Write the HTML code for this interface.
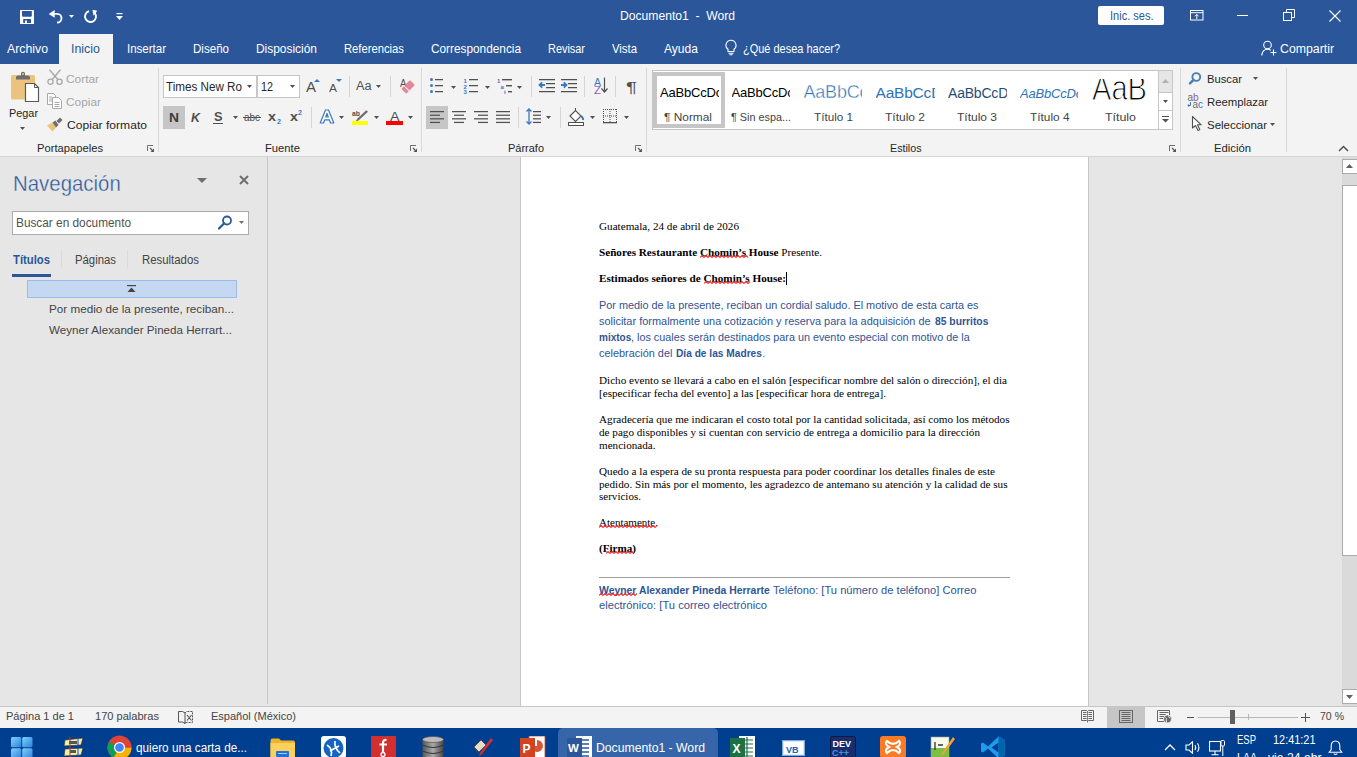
<!DOCTYPE html>
<html><head><meta charset="utf-8">
<style>
*{margin:0;padding:0;box-sizing:border-box}
html,body{width:1357px;height:757px;overflow:hidden;background:#E6E6E6;font-family:"Liberation Sans",sans-serif}
.a{position:absolute;display:block}
.t{position:absolute;white-space:nowrap;line-height:1;transform-origin:0 0;-webkit-font-smoothing:antialiased}
b{font-weight:bold}
</style></head><body>
<div class="a" style="left:0px;top:0px;width:1357px;height:64px;background:#2B579A;"></div>
<div class="a" style="left:0px;top:64px;width:1357px;height:92px;background:#F3F3F3;"></div>
<div class="a" style="left:0px;top:156px;width:1357px;height:1px;background:#D4D4D4;"></div>
<div class="a" style="left:0px;top:157px;width:1357px;height:549px;background:#E6E6E6;"></div>
<div class="a" style="left:267px;top:157px;width:1px;height:547px;background:#C6C6C6;"></div>
<div class="a" style="left:520px;top:157px;width:569px;height:549px;background:#C6C6C6;"></div>
<div class="a" style="left:521px;top:157px;width:567px;height:549px;background:#FFFFFF;"></div>
<div class="a" style="left:0px;top:706px;width:1357px;height:1px;background:#C6C6C6;"></div>
<div class="a" style="left:0px;top:707px;width:1357px;height:21px;background:#F3F3F3;"></div>
<div class="a" style="left:0px;top:728px;width:1357px;height:29px;background:#003E8F;"></div>
<div id="f1" class="t" style="left:620px;top:9.92px;font-size:12.5px;color:#FFFFFF;transform:scaleX(0.9698);">Documento1&nbsp; - &nbsp;Word</div>
<svg class="a" style="left:20px;top:10px;" width="14" height="14" viewBox="0 0 14 14"><rect x="0" y="0" width="14" height="14" rx="0.6" fill="#fff"/><path d="M2 1H11.8V6L11 6.8H2.8L2 6Z" fill="#2B579A"/><rect x="3.2" y="9" width="7.8" height="4" fill="#2B579A"/><rect x="5" y="10.5" width="2" height="2.5" fill="#fff"/></svg>
<svg class="a" style="left:44px;top:6px;" width="22" height="20" viewBox="0 0 22 20"><path d="M4.7 7.9L10.7 4V11.75Z" fill="#fff"/><path d="M9.5 7.9H13.2A4.3 4.3 0 0 1 13.2 16.5H13" fill="none" stroke="#fff" stroke-width="1.9"/></svg>
<svg class="a" style="left:69px;top:15px;" width="5" height="3" viewBox="0 0 5 3"><path d="M0 0H5L2.5 3Z" fill="#fff"/></svg>
<svg class="a" style="left:83px;top:9px;" width="16" height="16" viewBox="0 0 16 16"><path d="M10.08 2.64A5.5 5.5 0 1 1 6.08 2.19" fill="none" stroke="#fff" stroke-width="1.9"/><path d="M9.5 0.8L14.2 1.8L10.6 6.8Z" fill="#fff"/></svg>
<svg class="a" style="left:116px;top:13px;" width="7" height="8" viewBox="0 0 7 8"><rect x="0.5" y="0" width="6" height="1.2" fill="#fff"/><path d="M0 3H7L3.5 7Z" fill="#fff"/></svg>
<div class="a" style="left:1098px;top:6px;width:66px;height:19px;background:#FFFFFF;border-radius:2px"></div>
<div id="f2" class="t" style="left:1109.5px;top:9.12px;font-size:13px;color:#2B579A;transform:scaleX(0.8480);">Inic. ses.</div>
<svg class="a" style="left:1190px;top:10px;" width="14" height="11" viewBox="0 0 14 11"><rect x="0.5" y="0.5" width="12.5" height="9.5" fill="none" stroke="#fff"/><rect x="1" y="2.2" width="12" height="1" fill="#fff"/><path d="M6.8 4.5V9M5 6.3L6.8 4.5L8.6 6.3" fill="none" stroke="#fff"/></svg>
<div class="a" style="left:1237px;top:15px;width:11px;height:1px;background:#FFFFFF;"></div>
<svg class="a" style="left:1283px;top:9px;" width="12" height="12" viewBox="0 0 12 12"><rect x="0.5" y="3.5" width="8" height="8" fill="none" stroke="#fff"/><path d="M3.5 3.5V0.5H11.5V8.5H8.5" fill="none" stroke="#fff"/></svg>
<svg class="a" style="left:1329px;top:10px;" width="12" height="12" viewBox="0 0 12 12"><path d="M0.5 0.5L11.5 11.5M11.5 0.5L0.5 11.5" stroke="#fff" stroke-width="1.1"/></svg>
<div class="a" style="left:59px;top:34px;width:54px;height:30px;background:#F3F3F3;"></div>
<div id="f3" class="t" style="left:7px;top:42.12px;font-size:13px;color:#FFFFFF;transform:scaleX(0.9456);">Archivo</div>
<div id="f4" class="t" style="left:127px;top:42.12px;font-size:13px;color:#FFFFFF;transform:scaleX(0.8848);">Insertar</div>
<div id="f5" class="t" style="left:193px;top:42.12px;font-size:13px;color:#FFFFFF;transform:scaleX(0.8896);">Dise&ntilde;o</div>
<div id="f6" class="t" style="left:256px;top:42.12px;font-size:13px;color:#FFFFFF;transform:scaleX(0.9175);">Disposici&oacute;n</div>
<div id="f7" class="t" style="left:344px;top:42.12px;font-size:13px;color:#FFFFFF;transform:scaleX(0.8649);">Referencias</div>
<div id="f8" class="t" style="left:431px;top:42.12px;font-size:13px;color:#FFFFFF;transform:scaleX(0.9089);">Correspondencia</div>
<div id="f9" class="t" style="left:548px;top:42.12px;font-size:13px;color:#FFFFFF;transform:scaleX(0.8394);">Revisar</div>
<div id="f10" class="t" style="left:612px;top:42.12px;font-size:13px;color:#FFFFFF;transform:scaleX(0.8719);">Vista</div>
<div id="f11" class="t" style="left:664px;top:42.12px;font-size:13px;color:#FFFFFF;transform:scaleX(0.9279);">Ayuda</div>
<div id="f12" class="t" style="left:743px;top:42.12px;font-size:13px;color:#FFFFFF;transform:scaleX(0.8442);">&iquest;Qu&eacute; desea hacer?</div>
<div id="f13" class="t" style="left:1280px;top:42.12px;font-size:13px;color:#FFFFFF;transform:scaleX(0.9461);">Compartir</div>
<div id="f14" class="t" style="left:71px;top:42.12px;font-size:13px;color:#2B579A;transform:scaleX(0.9552);">Inicio</div>
<svg class="a" style="left:724px;top:39px;" width="14" height="17" viewBox="0 0 14 17"><path d="M7 1.2A5 5 0 0 0 4 10.2V12.5H10V10.2A5 5 0 0 0 7 1.2Z" fill="none" stroke="#fff" stroke-width="1.1"/><path d="M4.5 14.2H9.5M5.5 15.8H8.5" stroke="#fff" stroke-width="1.1"/></svg>
<svg class="a" style="left:1261px;top:40px;" width="16" height="16" viewBox="0 0 16 16"><circle cx="6.5" cy="5" r="3.8" fill="none" stroke="#fff" stroke-width="1.1"/><path d="M0.8 15.5C1.2 11 3.5 9.2 6.5 9.2C8 9.2 9 9.6 9.8 10.2" fill="none" stroke="#fff" stroke-width="1.1"/><path d="M12.5 9.5V15.5M9.5 12.5H15.5" stroke="#fff" stroke-width="1.1"/></svg>
<div class="a" style="left:158px;top:68px;width:1px;height:84px;background:#D8D8D8;"></div>
<div class="a" style="left:421px;top:68px;width:1px;height:84px;background:#D8D8D8;"></div>
<div class="a" style="left:646px;top:68px;width:1px;height:84px;background:#D8D8D8;"></div>
<div class="a" style="left:1180px;top:68px;width:1px;height:84px;background:#D8D8D8;"></div>
<div class="a" style="left:1286px;top:68px;width:1px;height:84px;background:#D8D8D8;"></div>
<svg class="a" style="left:10px;top:71px;" width="31" height="32" viewBox="0 0 31 32"><rect x="1" y="4" width="24" height="24.5" rx="1.5" fill="#EBC37F"/><path d="M6 8.5V6.5Q6 4.5 8 4.5H11V2.5Q11 0.8 13 0.8Q15 0.8 15 2.5V4.5H18Q20 4.5 20 6.5V8.5Z" fill="#6E6E6E"/><circle cx="13" cy="3" r="1" fill="#EBC37F"/><path d="M15.5 12.5H24.5L28.5 16.5V30.5H15.5Z" fill="#fff" stroke="#5A5A5A" stroke-width="1.2"/><path d="M24.5 12.5V16.5H28.5" fill="none" stroke="#5A5A5A" stroke-width="1"/></svg>
<div id="f15" class="t" style="left:9px;top:107.89px;font-size:11.5px;color:#262626;transform:scaleX(0.9450);">Pegar</div>
<svg class="a" style="left:20px;top:127px;" width="5" height="3" viewBox="0 0 5 3"><path d="M0 0H5L2.5 3Z" fill="#505050"/></svg>
<div id="f16" class="t" style="left:66px;top:73.89px;font-size:11.5px;color:#A6A6A6;transform:scaleX(1.0328);">Cortar</div>
<svg class="a" style="left:47px;top:69px;" width="16" height="17" viewBox="0 0 16 17"><circle cx="3.5" cy="12.8" r="2.6" fill="none" stroke="#A8A8A8" stroke-width="1.3"/><circle cx="12.5" cy="12.8" r="2.6" fill="none" stroke="#A8A8A8" stroke-width="1.3"/><path d="M2.5 0.8L10.8 10.5M13.5 0.8L5.2 10.5" stroke="#A8A8A8" stroke-width="1.4"/></svg>
<div id="f17" class="t" style="left:66px;top:96.89px;font-size:11.5px;color:#A6A6A6;transform:scaleX(1.0327);">Copiar</div>
<svg class="a" style="left:46px;top:93px;" width="17" height="16" viewBox="0 0 17 16"><path d="M1.5 0.5H7.5L9.5 2.5V11.5H1.5Z" fill="#fff" stroke="#A8A8A8"/><path d="M6.5 4.5H12.5L15.5 7.5V15.5H6.5Z" fill="#fff" stroke="#A8A8A8"/><path d="M3 4H6M3 6H6M3 8H6M8.5 9.5H13.5M8.5 11.5H13.5M8.5 13.5H13.5" stroke="#A8A8A8"/></svg>
<div id="f18" class="t" style="left:66.5px;top:119.89px;font-size:11.5px;color:#262626;transform:scaleX(1.0518);">Copiar formato</div>
<svg class="a" style="left:46px;top:116px;" width="18" height="17" viewBox="0 0 18 17"><path d="M1 9.5L6.5 6.5L10 11.5L6.5 15.5Z" fill="#EBC37F"/><path d="M6.5 6.5L10 11.5L12.5 9L9.5 4.5Z" fill="#6E6E6E"/><path d="M10.5 5L14 1.5L16.5 4L13 7.5Z" fill="#6E6E6E"/></svg>
<div id="f19" class="t" style="left:36.5px;top:142.89px;font-size:11.5px;color:#262626;transform:scaleX(0.9737);">Portapapeles</div>
<svg class="a" style="left:147px;top:145px;" width="8" height="8" viewBox="0 0 8 8"><path d="M0.5 6V0.5H6" fill="none" stroke="#6E6E6E" stroke-width="1"/><path d="M3 3L6 6" stroke="#555" stroke-width="1.1"/><path d="M7 3.5V7H3.5Z" fill="#555"/></svg>
<div class="a" style="left:163px;top:75px;width:94px;height:23px;background:#C6C6C6;"></div>
<div class="a" style="left:164px;top:76px;width:92px;height:21px;background:#FFFFFF;"></div>
<div class="a" style="left:257px;top:75px;width:43px;height:23px;background:#C6C6C6;"></div>
<div class="a" style="left:258px;top:76px;width:41px;height:21px;background:#FFFFFF;"></div>
<div id="f20" class="t" style="left:166px;top:80.92px;font-size:12.5px;color:#262626;transform:scaleX(0.9325);">Times New Ro</div>
<svg class="a" style="left:247px;top:85px;" width="5" height="3" viewBox="0 0 5 3"><path d="M0 0H5L2.5 3Z" fill="#505050"/></svg>
<div id="f21" class="t" style="left:261px;top:80.92px;font-size:12.5px;color:#262626;transform:scaleX(0.8629);">12</div>
<svg class="a" style="left:290px;top:85px;" width="5" height="3" viewBox="0 0 5 3"><path d="M0 0H5L2.5 3Z" fill="#505050"/></svg>
<div id="f22" class="t" style="left:305.5px;top:80.02px;font-size:14px;color:#505050;transform:scaleX(1.0702);">A</div>
<svg class="a" style="left:314px;top:79px;" width="6" height="3" viewBox="0 0 6 3"><path d="M0 3H6L3 0Z" fill="#3A78C3"/></svg>
<div id="f23" class="t" style="left:328.5px;top:83.06px;font-size:11px;color:#505050;transform:scaleX(1.0894);">A</div>
<svg class="a" style="left:335.5px;top:79px;" width="6" height="3" viewBox="0 0 6 3"><path d="M0 0H6L3 3Z" fill="#3A78C3"/></svg>
<div class="a" style="left:349px;top:76px;width:1px;height:21px;background:#D5D5D5;"></div>
<div id="f24" class="t" style="left:356px;top:79.92px;font-size:12.5px;color:#505050;transform:scaleX(1.0133);">Aa</div>
<svg class="a" style="left:376px;top:85px;" width="5" height="3" viewBox="0 0 5 3"><path d="M0 0H5L2.5 3Z" fill="#505050"/></svg>
<div class="a" style="left:390px;top:76px;width:1px;height:21px;background:#D5D5D5;"></div>
<div id="f25" class="t" style="left:399.5px;top:78.36px;font-size:10.5px;color:#505050;transform:scaleX(0.9265);">A</div>
<svg class="a" style="left:400px;top:79px;" width="16" height="16" viewBox="0 0 16 16"><path d="M9.2 1.8Q10 1 10.8 1.8L14.2 5.2Q15 6 14.2 6.8L9.5 11.5L4.5 6.5Z" fill="#E3889A"/><path d="M3.8 7.2L8.8 12.2L7 14Q6.2 14.8 5.4 14L2 10.6Q1.2 9.8 2 9Z" fill="#E3889A"/></svg>
<div class="a" style="left:163px;top:106px;width:22px;height:23px;background:#C6C6C6;"></div>
<div id="f26" class="t" style="left:169px;top:111.12px;font-size:13px;color:#3C3C3C;font-weight:bold;transform:scaleX(1.0649);">N</div>
<div id="f27" class="t" style="left:191px;top:111.12px;font-size:13px;color:#505050;font-weight:bold;font-style:italic;transform:scaleX(0.9584);">K</div>
<div id="f28" class="t" style="left:213.5px;top:110.92px;font-size:12.5px;color:#505050;font-weight:bold;transform:scaleX(1.0187);">S</div>
<div class="a" style="left:213px;top:122.6px;width:10px;height:1.3px;background:#505050;"></div>
<svg class="a" style="left:233px;top:116px;" width="5" height="3" viewBox="0 0 5 3"><path d="M0 0H5L2.5 3Z" fill="#505050"/></svg>
<div id="f29" class="t" style="left:244px;top:112.06px;font-size:11px;color:#505050;transform:scaleX(0.9014);">abc</div>
<div class="a" style="left:243px;top:117px;width:18px;height:1px;background:#505050;"></div>
<div id="f30" class="t" style="left:268px;top:110.12px;font-size:13px;color:#505050;font-weight:bold;transform:scaleX(1.1058);">x</div>
<div id="f31" class="t" style="left:277px;top:118.07px;font-size:7px;color:#3A78C3;font-weight:bold;">2</div>
<div id="f32" class="t" style="left:290px;top:110.12px;font-size:13px;color:#505050;font-weight:bold;transform:scaleX(1.1058);">x</div>
<div id="f33" class="t" style="left:298px;top:109.07px;font-size:7px;color:#3A78C3;font-weight:bold;">2</div>
<div class="a" style="left:311px;top:107px;width:1px;height:21px;background:#D5D5D5;"></div>
<svg class="a" style="left:319px;top:109px;" width="16" height="15" viewBox="0 0 16 15"><path d="M1.2 14L6.5 1H9.5L14.8 14H11.5L10.3 10.8H5.7L4.5 14Z M6.7 8H9.3L8 4.4Z" fill="#fff" stroke="#3A78C3" stroke-width="1.2" stroke-linejoin="round"/></svg>
<svg class="a" style="left:339px;top:116px;" width="5" height="3" viewBox="0 0 5 3"><path d="M0 0H5L2.5 3Z" fill="#505050"/></svg>
<div id="f34" class="t" style="left:352px;top:109.85px;font-size:8px;color:#505050;font-weight:bold;transform:scaleX(0.8562);">ab</div>
<svg class="a" style="left:353px;top:110px;" width="16" height="12" viewBox="0 0 16 12"><path d="M13.2 0.2L4.2 8.8L2.5 11.8L5.8 10.3L15 1.8Z" fill="#6E6E6E"/></svg>
<div class="a" style="left:352px;top:121px;width:16px;height:4px;background:#FFFF00;"></div>
<svg class="a" style="left:374px;top:116px;" width="5" height="3" viewBox="0 0 5 3"><path d="M0 0H5L2.5 3Z" fill="#505050"/></svg>
<div id="f35" class="t" style="left:389.5px;top:110.07px;font-size:13.5px;color:#505050;transform:scaleX(1.0537);">A</div>
<div class="a" style="left:386px;top:121px;width:17px;height:4px;background:#FF0000;"></div>
<svg class="a" style="left:408px;top:116px;" width="5" height="3" viewBox="0 0 5 3"><path d="M0 0H5L2.5 3Z" fill="#505050"/></svg>
<svg class="a" style="left:410px;top:145px;" width="8" height="8" viewBox="0 0 8 8"><path d="M0.5 6V0.5H6" fill="none" stroke="#6E6E6E" stroke-width="1"/><path d="M3 3L6 6" stroke="#555" stroke-width="1.1"/><path d="M7 3.5V7H3.5Z" fill="#555"/></svg>
<div id="f36" class="t" style="left:264.5px;top:142.89px;font-size:11.5px;color:#262626;transform:scaleX(0.9773);">Fuente</div>
<svg class="a" style="left:429px;top:77px;" width="16" height="17" viewBox="0 0 16 17"><circle cx="2.5" cy="2.5" r="1.5" fill="#3A78C3"/><circle cx="2.5" cy="8.5" r="1.5" fill="#3A78C3"/><circle cx="2.5" cy="14.5" r="1.5" fill="#3A78C3"/><rect x="6" y="2" width="8" height="1.25" fill="#505050"/><rect x="6" y="8" width="8" height="1.25" fill="#505050"/><rect x="6" y="14" width="8" height="1.25" fill="#505050"/></svg>
<svg class="a" style="left:451px;top:86px;" width="5" height="3" viewBox="0 0 5 3"><path d="M0 0H5L2.5 3Z" fill="#505050"/></svg>
<svg class="a" style="left:462px;top:77px;" width="18" height="17" viewBox="0 0 18 17"><text x="1.5" y="5.5" font-size="6" font-family="Liberation Sans" font-weight="bold" fill="#3A78C3">1</text><text x="1.5" y="11.5" font-size="6" font-family="Liberation Sans" font-weight="bold" fill="#3A78C3">2</text><text x="1.5" y="17" font-size="6" font-family="Liberation Sans" font-weight="bold" fill="#3A78C3">3</text><rect x="7" y="2" width="9" height="1.25" fill="#505050"/><rect x="7" y="8" width="9" height="1.25" fill="#505050"/><rect x="7" y="14" width="9" height="1.25" fill="#505050"/></svg>
<svg class="a" style="left:485px;top:86px;" width="5" height="3" viewBox="0 0 5 3"><path d="M0 0H5L2.5 3Z" fill="#505050"/></svg>
<svg class="a" style="left:496px;top:77px;" width="20" height="17" viewBox="0 0 20 17"><text x="1" y="5.5" font-size="6" font-family="Liberation Sans" font-weight="bold" fill="#3A78C3">1</text><text x="4.5" y="11.5" font-size="6" font-family="Liberation Sans" font-weight="bold" fill="#3A78C3">a</text><text x="8" y="17" font-size="6" font-family="Liberation Sans" font-weight="bold" fill="#3A78C3">i</text><rect x="6" y="2" width="10" height="1.4" fill="#505050"/><rect x="10" y="8" width="6" height="1.4" fill="#505050"/><rect x="12" y="14" width="4" height="1.4" fill="#505050"/></svg>
<svg class="a" style="left:517px;top:86px;" width="5" height="3" viewBox="0 0 5 3"><path d="M0 0H5L2.5 3Z" fill="#505050"/></svg>
<div class="a" style="left:531px;top:76px;width:1px;height:21px;background:#D5D5D5;"></div>
<svg class="a" style="left:538px;top:78px;" width="18" height="15" viewBox="0 0 18 15"><rect x="1" y="1" width="16" height="1.25" fill="#505050"/><rect x="8" y="5" width="9" height="1.25" fill="#505050"/><rect x="8" y="9" width="9" height="1.25" fill="#505050"/><rect x="1" y="13" width="16" height="1.25" fill="#505050"/><path d="M7 7H1.5M4.2 4.3L1.5 7L4.2 9.7" fill="none" stroke="#3A78C3" stroke-width="1.8"/></svg>
<svg class="a" style="left:560px;top:78px;" width="18" height="15" viewBox="0 0 18 15"><rect x="1" y="1" width="16" height="1.25" fill="#505050"/><rect x="8" y="5" width="9" height="1.25" fill="#505050"/><rect x="8" y="9" width="9" height="1.25" fill="#505050"/><rect x="1" y="13" width="16" height="1.25" fill="#505050"/><path d="M1 7H6.5M3.8 4.3L6.5 7L3.8 9.7" fill="none" stroke="#3A78C3" stroke-width="1.8"/></svg>
<div class="a" style="left:584px;top:76px;width:1px;height:21px;background:#D5D5D5;"></div>
<div id="f37" class="t" style="left:593.5px;top:78.03px;font-size:10px;color:#3A78C3;transform:scaleX(1.0492);">A</div>
<div id="f38" class="t" style="left:593.5px;top:86.03px;font-size:10px;color:#9B59B6;transform:scaleX(1.1458);">Z</div>
<svg class="a" style="left:601px;top:77px;" width="7" height="16" viewBox="0 0 7 16"><path d="M3.5 0.5V15M0.5 11.5L3.5 15L6.5 11.5" fill="none" stroke="#505050" stroke-width="1.2"/></svg>
<div class="a" style="left:615px;top:76px;width:1px;height:21px;background:#D5D5D5;"></div>
<div id="f39" class="t" style="left:625.5px;top:80.02px;font-size:14px;color:#505050;transform:scaleX(1.4606);">&para;</div>
<div class="a" style="left:426px;top:106px;width:22px;height:23px;background:#C6C6C6;"></div>
<svg class="a" style="left:430px;top:111px;" width="15" height="14" viewBox="0 0 15 14"><rect x="0" y="0.0" width="14" height="1.25" fill="#505050"/><rect x="0" y="3.6" width="10" height="1.25" fill="#505050"/><rect x="0" y="7.2" width="14" height="1.25" fill="#505050"/><rect x="0" y="10.8" width="10" height="1.25" fill="#505050"/></svg>
<svg class="a" style="left:452px;top:111px;" width="15" height="14" viewBox="0 0 15 14"><rect x="0" y="0.0" width="14" height="1.25" fill="#505050"/><rect x="2" y="3.6" width="10" height="1.25" fill="#505050"/><rect x="0" y="7.2" width="14" height="1.25" fill="#505050"/><rect x="2" y="10.8" width="10" height="1.25" fill="#505050"/></svg>
<svg class="a" style="left:474px;top:111px;" width="15" height="14" viewBox="0 0 15 14"><rect x="0" y="0.0" width="14" height="1.25" fill="#505050"/><rect x="4" y="3.6" width="10" height="1.25" fill="#505050"/><rect x="0" y="7.2" width="14" height="1.25" fill="#505050"/><rect x="4" y="10.8" width="10" height="1.25" fill="#505050"/></svg>
<svg class="a" style="left:496px;top:111px;" width="15" height="14" viewBox="0 0 15 14"><rect x="0" y="0.0" width="14" height="1.25" fill="#505050"/><rect x="0" y="3.6" width="14" height="1.25" fill="#505050"/><rect x="0" y="7.2" width="14" height="1.25" fill="#505050"/><rect x="0" y="10.8" width="14" height="1.25" fill="#505050"/></svg>
<div class="a" style="left:518px;top:107px;width:1px;height:21px;background:#D5D5D5;"></div>
<svg class="a" style="left:526px;top:108px;" width="16" height="17" viewBox="0 0 16 17"><path d="M3 1V16M0.5 3.5L3 1L5.5 3.5M0.5 13.5L3 16L5.5 13.5" fill="none" stroke="#3A78C3" stroke-width="1.3"/><rect x="7" y="3.0" width="8" height="1.25" fill="#505050"/><rect x="7" y="6.6" width="8" height="1.25" fill="#505050"/><rect x="7" y="10.2" width="8" height="1.25" fill="#505050"/><rect x="7" y="13.8" width="8" height="1.25" fill="#505050"/></svg>
<svg class="a" style="left:546px;top:116px;" width="5" height="3" viewBox="0 0 5 3"><path d="M0 0H5L2.5 3Z" fill="#505050"/></svg>
<div class="a" style="left:560px;top:107px;width:1px;height:21px;background:#D5D5D5;"></div>
<svg class="a" style="left:567px;top:107px;" width="19" height="19" viewBox="0 0 19 19"><path d="M3 9L8.5 3.5L14 9L8.5 14.5Z" fill="#fff" stroke="#505050" stroke-width="1.1"/><path d="M8.5 3.5V1" stroke="#505050"/><path d="M14 9Q16.5 11 16 13" fill="none" stroke="#3A78C3" stroke-width="2"/><rect x="1.5" y="15.5" width="15" height="3" fill="#fff" stroke="#505050"/></svg>
<svg class="a" style="left:590px;top:116px;" width="5" height="3" viewBox="0 0 5 3"><path d="M0 0H5L2.5 3Z" fill="#505050"/></svg>
<svg class="a" style="left:603px;top:109px;" width="14" height="15" viewBox="0 0 14 15"><rect x="0" y="0" width="1" height="1" fill="#505050"/><rect x="0" y="6.5" width="1" height="1" fill="#505050"/><rect x="0" y="0" width="1" height="1" fill="#505050"/><rect x="6.5" y="0" width="1" height="1" fill="#505050"/><rect x="13" y="0" width="1" height="1" fill="#505050"/><rect x="2" y="0" width="1" height="1" fill="#505050"/><rect x="2" y="6.5" width="1" height="1" fill="#505050"/><rect x="0" y="2" width="1" height="1" fill="#505050"/><rect x="6.5" y="2" width="1" height="1" fill="#505050"/><rect x="13" y="2" width="1" height="1" fill="#505050"/><rect x="4" y="0" width="1" height="1" fill="#505050"/><rect x="4" y="6.5" width="1" height="1" fill="#505050"/><rect x="0" y="4" width="1" height="1" fill="#505050"/><rect x="6.5" y="4" width="1" height="1" fill="#505050"/><rect x="13" y="4" width="1" height="1" fill="#505050"/><rect x="6" y="0" width="1" height="1" fill="#505050"/><rect x="6" y="6.5" width="1" height="1" fill="#505050"/><rect x="0" y="6" width="1" height="1" fill="#505050"/><rect x="6.5" y="6" width="1" height="1" fill="#505050"/><rect x="13" y="6" width="1" height="1" fill="#505050"/><rect x="8" y="0" width="1" height="1" fill="#505050"/><rect x="8" y="6.5" width="1" height="1" fill="#505050"/><rect x="0" y="8" width="1" height="1" fill="#505050"/><rect x="6.5" y="8" width="1" height="1" fill="#505050"/><rect x="13" y="8" width="1" height="1" fill="#505050"/><rect x="10" y="0" width="1" height="1" fill="#505050"/><rect x="10" y="6.5" width="1" height="1" fill="#505050"/><rect x="0" y="10" width="1" height="1" fill="#505050"/><rect x="6.5" y="10" width="1" height="1" fill="#505050"/><rect x="13" y="10" width="1" height="1" fill="#505050"/><rect x="12" y="0" width="1" height="1" fill="#505050"/><rect x="12" y="6.5" width="1" height="1" fill="#505050"/><rect x="0" y="12" width="1" height="1" fill="#505050"/><rect x="6.5" y="12" width="1" height="1" fill="#505050"/><rect x="13" y="12" width="1" height="1" fill="#505050"/><rect x="0" y="13" width="14" height="1.3" fill="#505050"/></svg>
<svg class="a" style="left:624px;top:116px;" width="5" height="3" viewBox="0 0 5 3"><path d="M0 0H5L2.5 3Z" fill="#505050"/></svg>
<svg class="a" style="left:635px;top:145px;" width="8" height="8" viewBox="0 0 8 8"><path d="M0.5 6V0.5H6" fill="none" stroke="#6E6E6E" stroke-width="1"/><path d="M3 3L6 6" stroke="#555" stroke-width="1.1"/><path d="M7 3.5V7H3.5Z" fill="#555"/></svg>
<div id="f40" class="t" style="left:507.5px;top:142.89px;font-size:11.5px;color:#262626;transform:scaleX(0.9544);">P&aacute;rrafo</div>
<div class="a" style="left:652px;top:70px;width:521px;height:60px;background:#C6C6C6;"></div>
<div class="a" style="left:653px;top:71px;width:505px;height:58px;background:#FFFFFF;"></div>
<div class="a" style="left:653px;top:72px;width:72px;height:56px;background:#C6C6C6;"></div>
<div class="a" style="left:657px;top:76px;width:64px;height:48px;background:#FFFFFF;"></div>
<div class="a" style="left:660px;top:72px;width:59px;height:36px;overflow:hidden">
<div id="f41" class="t" style="left:0px;top:14.12px;font-size:13px;color:#000;letter-spacing:-0.2px;">AaBbCcDc</div>
</div>
<div id="f42" class="t" style="left:664px;top:111.89px;font-size:11.5px;color:#444444;transform:scaleX(1.0336);">&para; Normal</div>
<div class="a" style="left:731.5px;top:72px;width:58.5px;height:36px;overflow:hidden">
<div id="f43" class="t" style="left:0px;top:14.12px;font-size:13px;color:#000;letter-spacing:-0.2px;">AaBbCcDc</div>
</div>
<div id="f44" class="t" style="left:730.5px;top:111.89px;font-size:11.5px;color:#444444;transform:scaleX(0.9416);">&para; Sin espa...</div>
<div class="a" style="left:803.5px;top:72px;width:58.5px;height:36px;overflow:hidden">
<div id="f45" class="t" style="left:0px;top:11.01px;font-size:18px;color:#2E74B5;letter-spacing:-0.2px;-webkit-text-stroke:0.4px #fff">AaBbCc</div>
</div>
<div id="f46" class="t" style="left:813.5px;top:111.89px;font-size:11.5px;color:#444444;transform:scaleX(1.0167);">T&iacute;tulo 1</div>
<div class="a" style="left:875.5px;top:72px;width:59.0px;height:36px;overflow:hidden">
<div id="f47" class="t" style="left:0px;top:13.13px;font-size:15.5px;color:#2E74B5;letter-spacing:-0.2px;">AaBbCcD</div>
</div>
<div id="f48" class="t" style="left:885px;top:111.89px;font-size:11.5px;color:#444444;transform:scaleX(1.0428);">T&iacute;tulo 2</div>
<div class="a" style="left:948px;top:72px;width:58.5px;height:36px;overflow:hidden">
<div id="f49" class="t" style="left:0px;top:14.02px;font-size:14px;color:#1F4D78;letter-spacing:-0.2px;">AaBbCcD</div>
</div>
<div id="f50" class="t" style="left:957px;top:111.89px;font-size:11.5px;color:#444444;transform:scaleX(1.0428);">T&iacute;tulo 3</div>
<div class="a" style="left:1020px;top:72px;width:58px;height:36px;overflow:hidden">
<div id="f51" class="t" style="left:0px;top:15.12px;font-size:13px;color:#2E74B5;font-style:italic;letter-spacing:-0.2px;">AaBbCcDc</div>
</div>
<div id="f52" class="t" style="left:1029.5px;top:111.89px;font-size:11.5px;color:#444444;transform:scaleX(1.0297);">T&iacute;tulo 4</div>
<div class="a" style="left:1088px;top:79px;width:66px;height:30px;overflow:hidden">
<div id="f53" class="t" style="left:4px;top:-9.38px;font-size:35px;color:#000;transform:scaleX(0.8314);-webkit-text-stroke:1.1px #fff;paint-order:normal">AaB</div>
</div>
<div id="f54" class="t" style="left:1105px;top:111.89px;font-size:11.5px;color:#444444;transform:scaleX(1.0777);">T&iacute;tulo</div>
<div class="a" style="left:1158px;top:70px;width:15px;height:60px;background:#C6C6C6;"></div>
<div class="a" style="left:1159px;top:71px;width:13px;height:21px;background:#E6E6E6;"></div>
<div class="a" style="left:1159px;top:93px;width:13px;height:17px;background:#FFFFFF;"></div>
<div class="a" style="left:1159px;top:111px;width:13px;height:18px;background:#FFFFFF;"></div>
<svg class="a" style="left:1162px;top:79px;" width="7" height="4" viewBox="0 0 7 4"><path d="M0 4H7L3.5 0Z" fill="#B0B0B0"/></svg>
<svg class="a" style="left:1163px;top:100px;" width="5" height="3" viewBox="0 0 5 3"><path d="M0 0H5L2.5 3Z" fill="#505050"/></svg>
<svg class="a" style="left:1162px;top:116px;" width="7" height="7" viewBox="0 0 7 7"><rect x="0" y="0" width="7" height="1" fill="#505050"/><path d="M0 3H7L3.5 6.5Z" fill="#505050"/></svg>
<svg class="a" style="left:1169px;top:145px;" width="8" height="8" viewBox="0 0 8 8"><path d="M0.5 6V0.5H6" fill="none" stroke="#6E6E6E" stroke-width="1"/><path d="M3 3L6 6" stroke="#555" stroke-width="1.1"/><path d="M7 3.5V7H3.5Z" fill="#555"/></svg>
<div id="f55" class="t" style="left:889.5px;top:142.89px;font-size:11.5px;color:#262626;transform:scaleX(0.9299);">Estilos</div>
<svg class="a" style="left:1188px;top:71px;" width="15" height="15" viewBox="0 0 15 15"><circle cx="8.3" cy="6" r="3.9" fill="none" stroke="#4A7EBB" stroke-width="1.9"/><path d="M5.5 8.8L2 12.3" stroke="#4A7EBB" stroke-width="2.4" stroke-linecap="round"/></svg>
<div id="f56" class="t" style="left:1207px;top:73.89px;font-size:11.5px;color:#262626;transform:scaleX(0.9777);">Buscar</div>
<svg class="a" style="left:1253px;top:77px;" width="5" height="3" viewBox="0 0 5 3"><path d="M0 0H5L2.5 3Z" fill="#505050"/></svg>
<div id="f57" class="t" style="left:1187.5px;top:93.03px;font-size:10px;color:#6E6E6E;">a</div>
<div id="f58" class="t" style="left:1193px;top:93.03px;font-size:10px;color:#8E5BB5;">b</div>
<div id="f59" class="t" style="left:1192.5px;top:100.03px;font-size:10px;color:#6E6E6E;">a</div>
<div id="f60" class="t" style="left:1198px;top:100.03px;font-size:10px;color:#3A78C3;">c</div>
<svg class="a" style="left:1187px;top:102px;" width="5" height="5" viewBox="0 0 5 5"><path d="M3.5 0V3.5H1M2.2 2.2L0.8 3.5L2.2 4.8" fill="none" stroke="#3A78C3" stroke-width="1"/></svg>
<div id="f61" class="t" style="left:1207px;top:96.89px;font-size:11.5px;color:#262626;transform:scaleX(0.9839);">Reemplazar</div>
<svg class="a" style="left:1191px;top:115px;" width="11" height="17" viewBox="0 0 11 17"><path d="M1.5 1.5V13L4.5 10.5L7 15.5L8.8 14.6L6.5 9.8H10.2Z" fill="#fff" stroke="#505050" stroke-width="1.1" stroke-linejoin="round"/></svg>
<div id="f62" class="t" style="left:1207px;top:119.89px;font-size:11.5px;color:#262626;transform:scaleX(0.9984);">Seleccionar</div>
<svg class="a" style="left:1270px;top:123px;" width="5" height="3" viewBox="0 0 5 3"><path d="M0 0H5L2.5 3Z" fill="#505050"/></svg>
<div id="f63" class="t" style="left:1214px;top:142.89px;font-size:11.5px;color:#262626;transform:scaleX(0.9809);">Edici&oacute;n</div>
<svg class="a" style="left:1338px;top:145px;" width="11" height="7" viewBox="0 0 11 7"><path d="M1 6L5.5 1.5L10 6" fill="none" stroke="#505050" stroke-width="1.5"/></svg>
<div id="f64" class="t" style="left:12.7px;top:173.68px;font-size:21.5px;color:#2B579A;transform:scaleX(0.9494);-webkit-text-stroke:0.35px #E6E6E6">Navegaci&oacute;n</div>
<svg class="a" style="left:197px;top:178px;" width="10" height="5" viewBox="0 0 10 5"><path d="M0 0H10L5 5Z" fill="#6E6E6E"/></svg>
<svg class="a" style="left:239px;top:175px;" width="10" height="10" viewBox="0 0 10 10"><path d="M1 1L9 9M9 1L1 9" stroke="#6E6E6E" stroke-width="2"/></svg>
<div class="a" style="left:12px;top:211px;width:237px;height:24px;background:#ABABAB;"></div>
<div class="a" style="left:13px;top:212px;width:235px;height:22px;background:#FFFFFF;"></div>
<div id="f65" class="t" style="left:15.5px;top:217.09px;font-size:12px;color:#505050;transform:scaleX(0.9850);">Buscar en documento</div>
<svg class="a" style="left:217px;top:215px;" width="16" height="15" viewBox="0 0 16 15"><circle cx="10" cy="5.5" r="4" fill="none" stroke="#2B579A" stroke-width="1.8"/><path d="M7.2 8.3L2 13.5" stroke="#2B579A" stroke-width="2.2" stroke-linecap="round"/></svg>
<svg class="a" style="left:239px;top:221px;" width="5" height="3" viewBox="0 0 5 3"><path d="M0 0H5L2.5 3Z" fill="#6E6E6E"/></svg>
<div id="f66" class="t" style="left:13px;top:254.09px;font-size:12px;color:#2B579A;font-weight:bold;transform:scaleX(0.9408);">T&iacute;tulos</div>
<div id="f67" class="t" style="left:75px;top:254.09px;font-size:12px;color:#444444;transform:scaleX(0.9452);">P&aacute;ginas</div>
<div id="f68" class="t" style="left:142px;top:254.09px;font-size:12px;color:#444444;transform:scaleX(0.9493);">Resultados</div>
<div class="a" style="left:61px;top:250px;width:1px;height:18px;background:#DADADA;"></div>
<div class="a" style="left:127px;top:250px;width:1px;height:18px;background:#DADADA;"></div>
<div class="a" style="left:12px;top:274px;width:39px;height:3px;background:#2B579A;"></div>
<div class="a" style="left:27px;top:280px;width:210px;height:18px;background:#9CBCE8;"></div>
<div class="a" style="left:28px;top:281px;width:208px;height:16px;background:#C5D8F2;"></div>
<svg class="a" style="left:127px;top:285px;" width="9" height="8" viewBox="0 0 9 8"><rect x="0" y="0" width="9" height="1.2" fill="#444"/><path d="M0.5 7H8.5L4.5 2.5Z" fill="#444"/></svg>
<div id="f69" class="t" style="left:49px;top:303.89px;font-size:11.5px;color:#444444;transform:scaleX(1.0154);">Por medio de la presente, reciban...</div>
<div id="f70" class="t" style="left:49px;top:324.89px;font-size:11.5px;color:#444444;transform:scaleX(1.0092);">Weyner Alexander Pineda Herrart...</div>
<div id="f71" class="t" style="left:599px;top:221.12px;font-size:11.2px;color:#000000;font-family:'Liberation Serif',serif;transform:scaleX(0.9970);">Guatemala, 24 de abril de 2026</div>
<div id="f72" class="t" style="left:599px;top:247.12px;font-size:11.2px;color:#000000;font-family:'Liberation Serif',serif;transform:scaleX(0.9980);"><b>Se&ntilde;ores Restaurante Chomin&rsquo;s House</b> Presente.</div>
<div id="f73" class="t" style="left:599px;top:273.12px;font-size:11.2px;color:#000000;font-family:'Liberation Serif',serif;transform:scaleX(0.9994);"><b>Estimados se&ntilde;ores de Chomin&rsquo;s House:</b></div>
<div class="a" style="left:786px;top:272px;width:1px;height:13px;background:#000000;"></div>
<div id="f74" class="t" style="left:599px;top:300.03px;font-size:10.6px;color:#2F5496;transform:scaleX(1.0262);">Por medio de la presente, reciban un cordial saludo. El motivo de esta carta es</div>
<div id="f75" class="t" style="left:599px;top:316.03px;font-size:10.6px;color:#2F5496;transform:scaleX(1.0333);">solicitar formalmente una cotizaci&oacute;n y reserva para la adquisici&oacute;n de</div>
<div id="f76" class="t" style="left:934.6px;top:316.03px;font-size:10.6px;color:#2F5496;font-weight:bold;transform:scaleX(0.9753);">85 burritos</div>
<div id="f77" class="t" style="left:599px;top:332.03px;font-size:10.6px;color:#2F5496;font-weight:bold;transform:scaleX(0.9457);">mixtos</div>
<div id="f78" class="t" style="left:631.3px;top:332.03px;font-size:10.6px;color:#2F5496;transform:scaleX(1.0197);">, los cuales ser&aacute;n destinados para un evento especial con motivo de la</div>
<div id="f79" class="t" style="left:599px;top:348.03px;font-size:10.6px;color:#2F5496;transform:scaleX(1.0299);">celebraci&oacute;n del</div>
<div id="f80" class="t" style="left:676.4px;top:348.03px;font-size:10.6px;color:#2F5496;font-weight:bold;transform:scaleX(0.9598);">D&iacute;a de las Madres</div>
<div id="f81" class="t" style="left:762.3px;top:348.03px;font-size:10.6px;color:#2F5496;">.</div>
<div id="f82" class="t" style="left:599px;top:375.12px;font-size:11.2px;color:#000000;font-family:'Liberation Serif',serif;transform:scaleX(0.9973);">Dicho evento se llevar&aacute; a cabo en el sal&oacute;n [especificar nombre del sal&oacute;n o direcci&oacute;n], el dia</div>
<div id="f83" class="t" style="left:599px;top:388.12px;font-size:11.2px;color:#000000;font-family:'Liberation Serif',serif;transform:scaleX(0.9958);">[especificar fecha del evento] a las [especificar hora de entrega].</div>
<div id="f84" class="t" style="left:599px;top:414.12px;font-size:11.2px;color:#000000;font-family:'Liberation Serif',serif;transform:scaleX(0.9973);">Agradecer&iacute;a que me indicaran el costo total por la cantidad solicitada, as&iacute; como los m&eacute;todos</div>
<div id="f85" class="t" style="left:599px;top:427.12px;font-size:11.2px;color:#000000;font-family:'Liberation Serif',serif;transform:scaleX(0.9971);">de pago disponibles y si cuentan con servicio de entrega a domicilio para la direcci&oacute;n</div>
<div id="f86" class="t" style="left:599px;top:440.12px;font-size:11.2px;color:#000000;font-family:'Liberation Serif',serif;transform:scaleX(0.9937);">mencionada.</div>
<div id="f87" class="t" style="left:599px;top:466.12px;font-size:11.2px;color:#000000;font-family:'Liberation Serif',serif;transform:scaleX(0.9983);">Quedo a la espera de su pronta respuesta para poder coordinar los detalles finales de este</div>
<div id="f88" class="t" style="left:599px;top:479.12px;font-size:11.2px;color:#000000;font-family:'Liberation Serif',serif;transform:scaleX(0.9976);">pedido. Sin m&aacute;s por el momento, les agradezco de antemano su atenci&oacute;n y la calidad de sus</div>
<div id="f89" class="t" style="left:599px;top:491.12px;font-size:11.2px;color:#000000;font-family:'Liberation Serif',serif;transform:scaleX(0.9864);">servicios.</div>
<div id="f90" class="t" style="left:599px;top:517.12px;font-size:11.2px;color:#000000;font-family:'Liberation Serif',serif;transform:scaleX(0.9841);">Atentamente.</div>
<div id="f91" class="t" style="left:599px;top:543.12px;font-size:11.2px;color:#000000;font-family:'Liberation Serif',serif;transform:scaleX(0.9925);"><b>(Firma)</b></div>
<div class="a" style="left:599px;top:577px;width:411px;height:1px;background:#A0A0A0;"></div>
<div id="f92" class="t" style="left:599px;top:585.03px;font-size:10.6px;color:#2F5496;font-weight:bold;transform:scaleX(0.9827);">Weyner Alexander Pineda Herrarte</div>
<div id="f93" class="t" style="left:773px;top:585.03px;font-size:10.6px;color:#2F5496;transform:scaleX(1.0524);">Tel&eacute;fono: [Tu n&uacute;mero de tel&eacute;fono] Correo</div>
<div id="f94" class="t" style="left:599px;top:600.03px;font-size:10.6px;color:#2F5496;transform:scaleX(1.0554);">electr&oacute;nico: [Tu correo electr&oacute;nico</div>
<svg class="a" style="left:700px;top:255px;" width="50" height="3" viewBox="0 0 50 3"><polyline points="0 2.4 2 0.6 4 2.4 6 0.6 8 2.4 10 0.6 12 2.4 14 0.6 16 2.4 18 0.6 20 2.4 22 0.6 24 2.4 26 0.6 28 2.4 30 0.6 32 2.4 34 0.6 36 2.4 38 0.6 40 2.4 42 0.6 44 2.4 46 0.6 48 2.4" fill="none" stroke="#FF1A1A" stroke-width="1.1"/></svg>
<svg class="a" style="left:704px;top:281px;" width="49" height="3" viewBox="0 0 49 3"><polyline points="0 2.4 2 0.6 4 2.4 6 0.6 8 2.4 10 0.6 12 2.4 14 0.6 16 2.4 18 0.6 20 2.4 22 0.6 24 2.4 26 0.6 28 2.4 30 0.6 32 2.4 34 0.6 36 2.4 38 0.6 40 2.4 42 0.6 44 2.4 46 0.6" fill="none" stroke="#FF1A1A" stroke-width="1.1"/></svg>
<svg class="a" style="left:599px;top:525px;" width="61" height="3" viewBox="0 0 61 3"><polyline points="0 2.4 2 0.6 4 2.4 6 0.6 8 2.4 10 0.6 12 2.4 14 0.6 16 2.4 18 0.6 20 2.4 22 0.6 24 2.4 26 0.6 28 2.4 30 0.6 32 2.4 34 0.6 36 2.4 38 0.6 40 2.4 42 0.6 44 2.4 46 0.6 48 2.4 50 0.6 52 2.4 54 0.6 56 2.4 58 0.6" fill="none" stroke="#FF1A1A" stroke-width="1.1"/></svg>
<svg class="a" style="left:606px;top:551px;" width="31" height="3" viewBox="0 0 31 3"><polyline points="0 2.4 2 0.6 4 2.4 6 0.6 8 2.4 10 0.6 12 2.4 14 0.6 16 2.4 18 0.6 20 2.4 22 0.6 24 2.4 26 0.6 28 2.4" fill="none" stroke="#FF1A1A" stroke-width="1.1"/></svg>
<svg class="a" style="left:599px;top:593px;" width="41" height="3" viewBox="0 0 41 3"><polyline points="0 2.4 2 0.6 4 2.4 6 0.6 8 2.4 10 0.6 12 2.4 14 0.6 16 2.4 18 0.6 20 2.4 22 0.6 24 2.4 26 0.6 28 2.4 30 0.6 32 2.4 34 0.6 36 2.4 38 0.6" fill="none" stroke="#FF1A1A" stroke-width="1.1"/></svg>
<div class="a" style="left:1342px;top:157px;width:15px;height:549px;background:#DADADA;"></div>
<div class="a" style="left:1342px;top:159px;width:15px;height:15px;background:#ABABAB;"></div>
<div class="a" style="left:1343px;top:160px;width:14px;height:13px;background:#FFFFFF;"></div>
<svg class="a" style="left:1346px;top:164px;" width="7" height="4" viewBox="0 0 7 4"><path d="M0 4H7L3.5 0Z" fill="#606060"/></svg>
<div class="a" style="left:1342px;top:185px;width:15px;height:371px;background:#ABABAB;"></div>
<div class="a" style="left:1343px;top:186px;width:14px;height:369px;background:#FFFFFF;"></div>
<div class="a" style="left:1342px;top:689px;width:15px;height:15px;background:#ABABAB;"></div>
<div class="a" style="left:1343px;top:690px;width:14px;height:13px;background:#FFFFFF;"></div>
<svg class="a" style="left:1346px;top:695px;" width="7" height="4" viewBox="0 0 7 4"><path d="M0 0H7L3.5 4Z" fill="#606060"/></svg>
<div id="f95" class="t" style="left:6px;top:711.06px;font-size:11px;color:#444444;transform:scaleX(1.0016);">P&aacute;gina 1 de 1</div>
<div id="f96" class="t" style="left:94.5px;top:711.06px;font-size:11px;color:#444444;transform:scaleX(1.0061);">170 palabras</div>
<svg class="a" style="left:177px;top:709px;" width="17" height="16" viewBox="0 0 17 16"><path d="M1.5 2.5H5.5L8 4V14.5L5.5 13H1.5Z" fill="none" stroke="#555" stroke-width="1"/><path d="M8 14.5V13" stroke="#555"/><path d="M10 6L14.5 11.5M14.5 6L10 11.5" stroke="#555" stroke-width="1.1"/><path d="M8 4L9.5 2.5H15.5V13.5H9.5L8 14.5" fill="none" stroke="#555" stroke-width="1" stroke-dasharray="2 1"/></svg>
<div id="f97" class="t" style="left:210.5px;top:711.06px;font-size:11px;color:#444444;transform:scaleX(1.0002);">Espa&ntilde;ol (M&eacute;xico)</div>
<svg class="a" style="left:1081px;top:710px;" width="13" height="13" viewBox="0 0 13 13"><path d="M0.5 0.5H5.5L6.5 1.5L7.5 0.5H12.5V10.5H7.5L6.5 11.5L5.5 10.5H0.5Z" fill="none" stroke="#666666"/><rect x="2" y="2" width="3.5" height="1" fill="#666666"/><rect x="7.5" y="2" width="3.5" height="1" fill="#666666"/><rect x="2" y="4" width="3.5" height="1" fill="#666666"/><rect x="7.5" y="4" width="3.5" height="1" fill="#666666"/><rect x="2" y="6" width="3.5" height="1" fill="#666666"/><rect x="7.5" y="6" width="3.5" height="1" fill="#666666"/><rect x="2" y="8" width="3.5" height="1" fill="#666666"/><rect x="7.5" y="8" width="3.5" height="1" fill="#666666"/><rect x="6" y="1" width="1" height="11.5" fill="#666666" opacity="0.8"/></svg>
<div class="a" style="left:1107px;top:707px;width:38px;height:21px;background:#C6C6C6;"></div>
<svg class="a" style="left:1119px;top:710px;" width="14" height="13" viewBox="0 0 14 13"><rect x="0.5" y="0.5" width="13" height="12" fill="none" stroke="#666666"/><rect x="2.5" y="2" width="9" height="1" fill="#666666"/><rect x="2.5" y="4" width="9" height="1" fill="#666666"/><rect x="2.5" y="6" width="9" height="1" fill="#666666"/><rect x="2.5" y="8" width="9" height="1" fill="#666666"/><rect x="2.5" y="10" width="9" height="1" fill="#666666"/></svg>
<svg class="a" style="left:1157px;top:710px;" width="15" height="14" viewBox="0 0 15 14"><path d="M8 11.5H0.5V0.5H12.5V5" fill="none" stroke="#666666"/><rect x="2.5" y="2" width="9" height="1" fill="#666666"/><rect x="2.5" y="4" width="6" height="1" fill="#666666"/><rect x="2.5" y="6" width="5" height="1" fill="#666666"/><rect x="2.5" y="8" width="4" height="1" fill="#666666"/><circle cx="10.5" cy="9" r="4" fill="#666666" stroke="#F3F3F3" stroke-width="0.8"/><path d="M8.3 7.3Q10 8 9.3 9.5Q9 11 10 12.5M11.5 5.6Q11.5 7.5 13 8.2" fill="none" stroke="#F3F3F3" stroke-width="0.9"/></svg>
<div class="a" style="left:1187px;top:716.5px;width:7px;height:1.6px;background:#505050;"></div>
<div class="a" style="left:1198px;top:717px;width:100px;height:1px;background:#B8B8B8;"></div>
<div class="a" style="left:1248px;top:714px;width:1px;height:6px;background:#B8B8B8;"></div>
<div class="a" style="left:1230px;top:710px;width:5px;height:14px;background:#606060;"></div>
<div class="a" style="left:1301px;top:716.5px;width:9px;height:1.6px;background:#505050;"></div>
<div class="a" style="left:1304.7px;top:712.8px;width:1.6px;height:9px;background:#505050;"></div>
<div id="f98" class="t" style="left:1320px;top:711.06px;font-size:11px;color:#444444;transform:scaleX(0.9570);">70 %</div>
<svg class="a" style="left:11px;top:737px;" width="22" height="21" viewBox="0 0 22 21"><defs><linearGradient id="wg" x1="0" y1="0" x2="1" y2="1"><stop offset="0" stop-color="#7DD3FF"/><stop offset="1" stop-color="#2F7FDB"/></linearGradient></defs><rect x="0" y="0" width="10.3" height="10.3" rx="1.5" fill="url(#wg)"/><rect x="11.2" y="0" width="10.3" height="10.3" rx="1.5" fill="url(#wg)"/><rect x="0" y="11.2" width="10.3" height="10.3" rx="1.5" fill="url(#wg)"/><rect x="11.2" y="11.2" width="10.3" height="10.3" rx="1.5" fill="url(#wg)"/></svg>
<svg class="a" style="left:61px;top:737px;" width="25" height="20" viewBox="0 0 25 20"><path d="M4 3L22 1L20 8L3 9Z" fill="#F2F0A8" stroke="#333" stroke-width="0.7"/><path d="M4 12L22 11L20 18L3 19Z" fill="#F2F0A8" stroke="#333" stroke-width="0.7"/><path d="M9 0V20" stroke="#C03030" stroke-width="1"/><path d="M17 0V20" stroke="#2040C0" stroke-width="1"/><rect x="8" y="4" width="8" height="3" fill="#555"/><rect x="9" y="13" width="6" height="3" fill="#555"/></svg>
<svg class="a" style="left:107px;top:735px;" width="26" height="22" viewBox="0 0 26 22"><circle cx="12.5" cy="12.5" r="12" fill="#DB4437"/><path d="M12.5 12.5L2.1 6.5A12 12 0 0 0 6.5 22.9Z" fill="#0F9D58"/><path d="M12.5 12.5L6.5 22.9A12 12 0 0 0 24.5 12.5Z" fill="#F4B400"/><path d="M12.5 12.5L24.5 12.5A12 12 0 0 0 23 6.5H12.5Z" fill="#DB4437"/><circle cx="12.5" cy="12.5" r="5.5" fill="#fff"/><circle cx="12.5" cy="12.5" r="4.3" fill="#4285F4"/></svg>
<div id="f99" class="t" style="left:136px;top:742.09px;font-size:12px;color:#FFFFFF;transform:scaleX(0.9786);">quiero una carta de...</div>
<svg class="a" style="left:270px;top:738px;" width="26" height="19" viewBox="0 0 26 19"><path d="M0.5 2.5Q0.5 0.5 2.5 0.5H9L11 2.5H23Q25 2.5 25 4.5V19H0.5Z" fill="#F0B429"/><rect x="0.5" y="5" width="24.5" height="14" fill="#FFD15C"/><rect x="6" y="13" width="13" height="6" rx="1" fill="#1F73D6"/><rect x="8" y="15" width="9" height="1" fill="#9CCBFF"/></svg>
<svg class="a" style="left:321px;top:736px;" width="25" height="21" viewBox="0 0 25 21"><rect x="0" y="0" width="25" height="22" rx="3" fill="#fff"/><circle cx="12.5" cy="12" r="10" fill="#1565C0"/><path d="M6 9Q12 13 10 20M14 5Q13 12 19 17M9 15L18 10" stroke="#fff" stroke-width="1.6" fill="none"/></svg>
<svg class="a" style="left:371px;top:736px;" width="25" height="21" viewBox="0 0 25 21"><rect x="0" y="0" width="25" height="22" fill="#D32F2F"/><path d="M15.5 4Q12 3.5 12 7V16" fill="none" stroke="#fff" stroke-width="2.2"/><path d="M8.5 8.5H16" stroke="#fff" stroke-width="2"/><circle cx="12" cy="18.5" r="2" fill="none" stroke="#fff" stroke-width="1.3"/></svg>
<svg class="a" style="left:421px;top:736px;" width="24" height="21" viewBox="0 0 24 21"><defs><linearGradient id="dbg" x1="0" x2="1"><stop offset="0" stop-color="#555"/><stop offset="0.5" stop-color="#AAA"/><stop offset="1" stop-color="#444"/></linearGradient></defs><rect x="1.5" y="3" width="21" height="19" fill="url(#dbg)"/><ellipse cx="12" cy="3.5" rx="10.5" ry="3" fill="#BBB" stroke="#555" stroke-width="0.7"/><path d="M1.5 9Q12 14 22.5 9M1.5 15Q12 20 22.5 15" stroke="#333" stroke-width="1" fill="none"/></svg>
<svg class="a" style="left:471px;top:737px;" width="24" height="20" viewBox="0 0 24 20"><path d="M3 10L10 3L15 8L8 15Z" fill="#E8DCC8" stroke="#444" stroke-width="0.8"/><path d="M20 1L9 16L8 19L11 17L22 3Z" fill="#D32F2F"/><path d="M4 11Q6 17 9 17" stroke="#444" fill="none"/></svg>
<svg class="a" style="left:520px;top:736px;" width="26" height="21" viewBox="0 0 26 21"><rect x="9" y="0" width="16" height="22" fill="#fff" stroke="#D04423" stroke-width="0.8"/><path d="M17 4A6 6 0 1 1 11 10H17Z" fill="#D04423" opacity="0.9"/><rect x="0" y="2" width="15" height="20" fill="#D04423"/><text x="2.5" y="17" font-size="12" font-weight="bold" font-family="Liberation Sans" fill="#fff">P</text></svg>
<div class="a" style="left:558px;top:728px;width:160px;height:29px;background:#3666A9;border-radius:5px 5px 0 0"></div>
<svg class="a" style="left:567px;top:736px;" width="25" height="21" viewBox="0 0 25 21"><rect x="9" y="0" width="16" height="22" fill="#fff"/><path d="M12 4H22M12 8H22M12 12H22M12 16H22M12 20H22" stroke="#2B579A" stroke-width="1.4"/><rect x="0" y="2" width="15" height="20" fill="#2B579A"/><text x="1" y="16" font-size="11.5" font-weight="bold" font-family="Liberation Sans" fill="#fff">W</text></svg>
<div id="f100" class="t" style="left:596px;top:742.09px;font-size:12px;color:#FFFFFF;transform:scaleX(1.0172);">Documento1 - Word</div>
<svg class="a" style="left:730px;top:736px;" width="26" height="21" viewBox="0 0 26 21"><rect x="9" y="0" width="16" height="22" fill="#fff"/><path d="M12 4H23M12 8H23M12 12H23M12 16H23M12 20H23M17 1V22" stroke="#1E7145" stroke-width="1.2"/><rect x="0" y="2" width="15" height="20" fill="#1E7145"/><text x="2.5" y="17" font-size="12" font-weight="bold" font-family="Liberation Sans" fill="#fff">X</text></svg>
<svg class="a" style="left:782px;top:740px;" width="23" height="17" viewBox="0 0 23 17"><rect x="0.5" y="0.5" width="22" height="15" fill="#DDEBFA" stroke="#7FA8D8"/><rect x="2" y="2" width="19" height="12" fill="#fff"/><text x="4" y="12.5" font-size="9" font-weight="bold" font-family="Liberation Sans" fill="#2060B0">VB</text></svg>
<svg class="a" style="left:830px;top:736px;" width="26" height="21" viewBox="0 0 26 21"><rect x="0.5" y="0.5" width="25" height="22" rx="2" fill="#1A2C6B" stroke="#0E1A40"/><text x="2.5" y="10.5" font-size="9" font-weight="bold" font-family="Liberation Sans" fill="#fff">DEV</text><text x="2" y="20" font-size="9" font-weight="bold" font-family="Liberation Sans" fill="#3A9AE0">C++</text></svg>
<svg class="a" style="left:880px;top:736px;" width="26" height="21" viewBox="0 0 26 21"><rect x="0" y="0" width="26" height="22" rx="3" fill="#FB7A24"/><path d="M7 5Q13 11 19 5Q22 8 17 11Q22 14 19 17Q13 11 7 17Q4 14 9 11Q4 8 7 5Z" fill="none" stroke="#fff" stroke-width="2.2"/></svg>
<svg class="a" style="left:930px;top:736px;" width="26" height="21" viewBox="0 0 26 21"><rect x="1" y="1" width="18" height="21" fill="#F6F8E8" stroke="#999" stroke-width="0.6"/><rect x="1" y="12" width="18" height="10" fill="#7BC043"/><path d="M5 6V14M8 9H13" stroke="#333" stroke-width="1.3"/><path d="M23 1L12 17L11 20L14 18L25 3Z" fill="#F2A12E"/></svg>
<svg class="a" style="left:980px;top:736px;" width="26" height="21" viewBox="0 0 26 21"><path d="M18.5 0.5L24.5 3.5V19.5L18.5 22.5L8 12.5L3 16.5L1 15.5V7.5L3 6.5L8 10.5Z" fill="#1F9CF0"/><path d="M18.5 6.5V16.5L11.5 11.5Z" fill="#003E8F"/><path d="M18.5 0.5L24.5 3.5V19.5L18.5 22.5Z" fill="#0065A9"/></svg>
<svg class="a" style="left:1164px;top:744px;" width="12" height="7" viewBox="0 0 12 7"><path d="M1 6L6 1L11 6" fill="none" stroke="#fff" stroke-width="1.3"/></svg>
<svg class="a" style="left:1185px;top:741px;" width="18" height="13" viewBox="0 0 18 13"><path d="M1 4H4L7.5 0.8V12.2L4 9H1Z" fill="none" stroke="#fff" stroke-width="1.1"/><path d="M10 4Q11.5 6.5 10 9M12.5 2.2Q15.2 6.5 12.5 10.8" fill="none" stroke="#fff" stroke-width="1.1"/></svg>
<svg class="a" style="left:1209px;top:740px;" width="19" height="17" viewBox="0 0 19 17"><rect x="0.5" y="1.5" width="11" height="9.5" fill="none" stroke="#fff" stroke-width="1.1"/><path d="M6 11V14.5M2.5 14.8H9.5" stroke="#fff" stroke-width="1.1"/><rect x="12" y="0.5" width="3.5" height="5.5" rx="1" fill="#003E8F" stroke="#fff" stroke-width="1"/><path d="M13.8 6V16" stroke="#fff"/></svg>
<div id="f101" class="t" style="left:1237px;top:734.09px;font-size:12px;color:#FFFFFF;transform:scaleX(0.7912);">ESP</div>
<div id="f102" class="t" style="left:1237px;top:752.09px;font-size:12px;color:#FFFFFF;transform:scaleX(0.8815);">LAA</div>
<div id="f103" class="t" style="left:1273px;top:734.09px;font-size:12px;color:#FFFFFF;transform:scaleX(0.9097);">12:41:21</div>
<div id="f104" class="t" style="left:1268px;top:752.09px;font-size:12px;color:#FFFFFF;transform:scaleX(1.0151);">vie 24 abr</div>
<svg class="a" style="left:1328px;top:740px;" width="15" height="16" viewBox="0 0 15 16"><path d="M7.5 1Q3.2 1 3.2 6.2V9.5L1.2 12.3H13.8L11.8 9.5V6.2Q11.8 1 7.5 1Z" fill="none" stroke="#fff" stroke-width="1.1"/><path d="M5.8 13.6Q7.5 15.4 9.2 13.6" fill="none" stroke="#fff" stroke-width="1.1"/></svg>
</body></html>
